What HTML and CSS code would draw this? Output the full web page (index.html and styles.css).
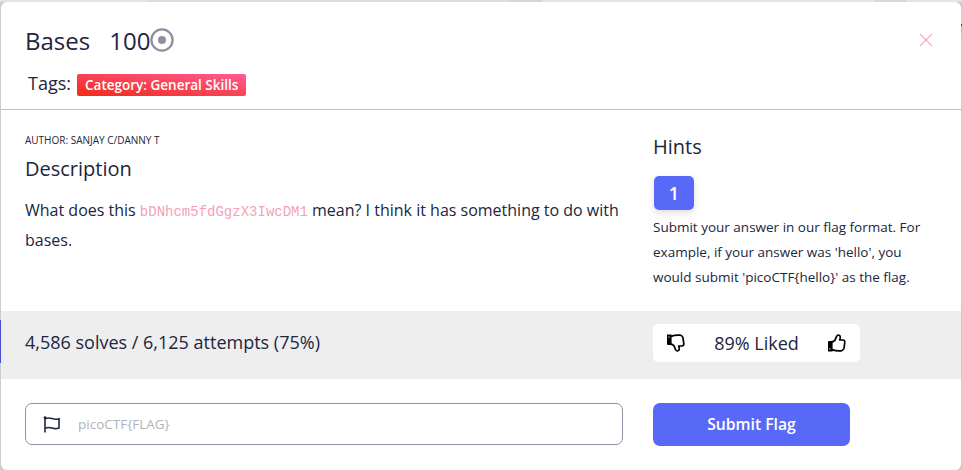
FILE: index.html
```html
<!DOCTYPE html>
<html lang="en">
<head>
<meta charset="utf-8">
<title>Bases</title>
<link rel="stylesheet" href="styles.css">
</head>
<body>
<div class="backdrop">
<main class="modal">
  <header class="head">
    <div class="title-row">
      <h1 class="title"><span>Bases</span><span class="points">100</span><svg class="coin" viewBox="0 0 24 24"><circle cx="12" cy="12" r="10.6" fill="none" stroke="#8e909f" stroke-width="2.3"/><circle cx="12" cy="12" r="4" fill="#8e909f"/></svg></h1>
      <svg class="close" viewBox="0 0 14 14"><path d="M1 1l12 12M13 1L1 13" stroke="#ffa3c0" stroke-width="1.1"/></svg>
    </div>
    <div class="tags"><span>Tags:</span><span class="tag">Category: General Skills</span></div>
  </header>
  <section class="body">
    <div class="desc">
      <div class="author">AUTHOR: SANJAY C/DANNY T</div>
      <h2 class="heading">Description</h2>
      <p class="text">What does this <code>bDNhcm5fdGgzX3IwcDM1</code> mean? I think it has something to do with bases.</p>
    </div>
    <div class="hints">
      <h2 class="heading">Hints</h2>
      <button class="hint">1</button>
      <p class="hint-text">Submit your answer in our flag format. For example, if your answer was 'hello', you would submit 'picoCTF{hello}' as the flag.</p>
    </div>
  </section>
  <section class="stats">
    <div class="solves">4,586 solves / 6,125 attempts (75%)</div>
    <div class="liked">
      <svg class="thumb" viewBox="0 0 18 18"><g transform="matrix(1 0 0 -1 0 18)"><path class="thumb-line" d="M4 8.3L7 6.2L8.7 2.2Q9.2 .9 10.6 1Q12.7 1.5 12.2 4L11.7 6H15.2Q17 6.3 16.8 8.2L16 14.2Q15.6 16.2 13.6 16.8Q8.5 17.4 4 15.6"/><path d="M0 7.3l4.6-.5v10.7H0z"/><path d="M1.4 14.2h1v1.2h-1z" fill="#fff"/></g></svg>
      <span>89% Liked</span>
      <svg class="thumb thumb-up" viewBox="0 0 18 18"><path class="thumb-line" d="M4 8.3L7 6.2L8.7 2.2Q9.2 .9 10.6 1Q12.7 1.5 12.2 4L11.7 6H15.2Q17 6.3 16.8 8.2L16 14.2Q15.6 16.2 13.6 16.8Q8.5 17.4 4 15.6"/><path d="M0 7.3l4.6-.5v10.7H0z"/><path d="M1.4 14.2h1v1.2h-1z" fill="#fff"/></svg>
    </div>
  </section>
  <section class="submit">
    <label class="field">
      <svg class="flag" viewBox="0 0 18 17"><path d="M2 1v15.5M2 2.7Q5.4 1.3 9 2.6T16 2.7V12Q12.5 13.2 9 12T2 12.2" fill="none" stroke="#202640" stroke-width="1.6"/><circle cx="2" cy="1.7" r="1.4" fill="#202640"/></svg>
      <input class="input" type="text" placeholder="picoCTF{FLAG}">
    </label>
    <button class="send">Submit Flag</button>
  </section>
</main>
<i class="behind behind-top"></i><i class="behind behind-left"></i><i class="behind behind-right"></i>
</div>
</body>
</html>
```
FILE: styles.css
```css
* { box-sizing: border-box; }
body { margin: 0; font-family: "Open Sans", sans-serif; color: #202640; }
h1, h2, p { margin: 0; font-weight: 400; }
button { border: 0; padding: 0; color: #fff; background: #5869f7; font-family: inherit; font-weight: 600; display: block; }
.backdrop { position: relative; height: 470px; padding: 2px 1px 0; background: #cbcbd0; overflow: hidden; }
.modal { height: 468px; background: #fff; border-radius: 6px; overflow: hidden; }
.head { height: 108px; border-bottom: 1px solid #bfbfbf; padding: 21px 28px 0 24px; }
.title-row { display: flex; justify-content: space-between; align-items: flex-start; }
.title { display: flex; font-size: 24px; line-height: 36px; }
.points { margin-left: 19px; }
.coin { width: 24px; height: 24px; margin-top: 5px; }
.close { width: 14px; height: 14px; margin-top: 10px; }
.tags { display: flex; align-items: center; gap: 6px; margin: 9px 0 0 3px; font-size: 18px; line-height: 30px; }
.tag { width: 169px; height: 22px; padding: 0 8px; margin-top: 3px; border-radius: 2px; font-size: 13.5px; line-height: 22px; font-weight: 600; color: #fff; white-space: nowrap; background: linear-gradient(to top right, #f22a18, #ff5c93); }
.body { display: grid; grid-template-columns: 628px 1fr; height: 201px; padding: 23px 24px 0; }
.author { font-size: 10px; line-height: 14px; }
.heading { font-size: 20px; line-height: 30px; }
.desc .heading { margin-top: 7px; }
.text { width: 604px; margin-top: 11px; font-size: 16px; line-height: 30px; }
code { font-family: "Liberation Mono", monospace; font-size: 14px; line-height: 1; color: #f4a1b6; }
.hints .heading { margin-top: -1px; }
.hint { width: 40px; height: 34px; margin: 14px 0 5px 1px; border-radius: 5px; font-size: 18px; line-height: 34px; box-shadow: 0 3px 7px #0002; }
.hint-text { width: 284px; font-size: 13.5px; line-height: 25px; }
.stats { display: grid; grid-template-columns: 628px 1fr; height: 68px; padding: 13px 24px 0; background: #eee; font-size: 18px; }
.solves { line-height: 37px; }
.liked { width: 207px; height: 38px; padding: 0 14px; border-radius: 5px; background: #fff; display: flex; align-items: center; justify-content: space-between; }
.thumb { width: 18px; height: 18px; }
.thumb-line { fill: none; stroke: #000; stroke-width: 1.7; stroke-linejoin: round; }
.submit { display: grid; grid-template-columns: 598px 197px; gap: 30px; padding: 24px 24px 0; }
.field { display: flex; align-items: center; height: 42px; padding-left: 17px; border: 1px solid #8e909f; border-radius: 7px; }
.flag { width: 18px; height: 17px; }
.input { flex: 1; border: 0; outline: 0; padding: 0; margin: 0 17px; font: 13.5px "Open Sans", sans-serif; }
.input::placeholder { color: #b0b3bb; }
.send { height: 43px; padding-bottom: 1px; border-radius: 7px; font-size: 15.7px; }
.behind { position: absolute; }
.behind-top { left: 0; top: 0; width: 962px; height: 2px; background: linear-gradient(90deg, #e4e4e4 146px, #dddce2 146px 510px, #d5d3dc 510px 542px, #e4e4e4 542px 874px, #d8d8dd 874px 906px, #e4e4e4 906px); }
.behind-left { left: 0; top: 320px; width: 1px; height: 43px; background: #4550cf; }
.behind-right { right: 0; top: 24px; width: 1px; height: 9px; background: #8fc5cb; border-top: 2px solid #46515e; }
```
